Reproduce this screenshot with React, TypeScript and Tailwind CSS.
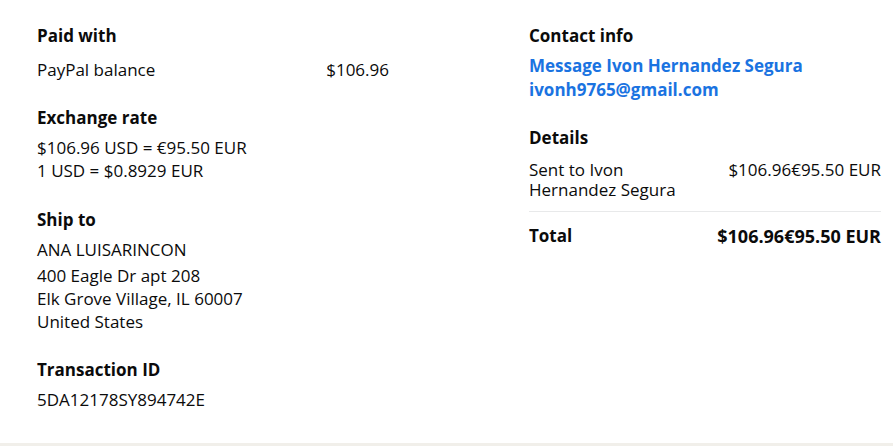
import React from 'react'

function Heading({ children }: { children: React.ReactNode }) {
  return <h3 className="text-[17px] font-bold leading-6 text-[#0b0b0b]">{children}</h3>
}

export default function App() {
  return (
    <div className="flex h-[446px] w-full flex-col bg-white font-['Open_Sans',sans-serif] text-[17px] text-[#0b0b0b]">
      <div className="grid flex-1 grid-cols-[352px_352px] gap-x-[140px] pl-[37px] pt-6">
        {/* left column */}
        <div className="flex flex-col">
          <section>
            <Heading>Paid with</Heading>
            <div className="mt-[10px] flex justify-between leading-6">
              <span>PayPal balance</span>
              <span>$106.96</span>
            </div>
          </section>

          <section className="mt-6">
            <Heading>Exchange rate</Heading>
            <div className="mt-[6px] leading-[23px]">
              <p>$106.96 USD = €95.50 EUR</p>
              <p>1 USD = $0.8929 EUR</p>
            </div>
          </section>

          <section className="mt-[26px]">
            <Heading>Ship to</Heading>
            <p className="mt-[6px] leading-6">ANA LUISARINCON</p>
            <div className="mt-[2px] leading-[23px]">
              <p>400 Eagle Dr apt 208</p>
              <p>Elk Grove Village, IL 60007</p>
              <p>United States</p>
            </div>
          </section>

          <section className="mt-[25px]">
            <Heading>Transaction ID</Heading>
            <p className="mt-[6px] leading-6">5DA12178SY894742E</p>
          </section>
        </div>

        {/* right column */}
        <div className="flex flex-col">
          <section>
            <Heading>Contact info</Heading>
            <div className="mt-[6px] font-bold leading-6 text-[#1a73e1]">
              <a href="#">Message Ivon Hernandez Segura</a>
              <br />
              <a href="#">ivonh9765@gmail.com</a>
            </div>
          </section>

          <section className="mt-6">
            <Heading>Details</Heading>
            <div className="mt-[10px] flex justify-between border-b border-[#e8e9ea] pb-[11px]">
              <span className="w-[170px] leading-5">Sent to Ivon Hernandez Segura</span>
              <span className="leading-5">$106.96€95.50 EUR</span>
            </div>
            <div className="flex items-center justify-between pt-3 font-bold leading-6">
              <span>Total</span>
              <span className="text-[18px]">$106.96€95.50 EUR</span>
            </div>
          </section>
        </div>
      </div>
      <div className="h-[3px] bg-[#f1efea]" />
    </div>
  )
}
